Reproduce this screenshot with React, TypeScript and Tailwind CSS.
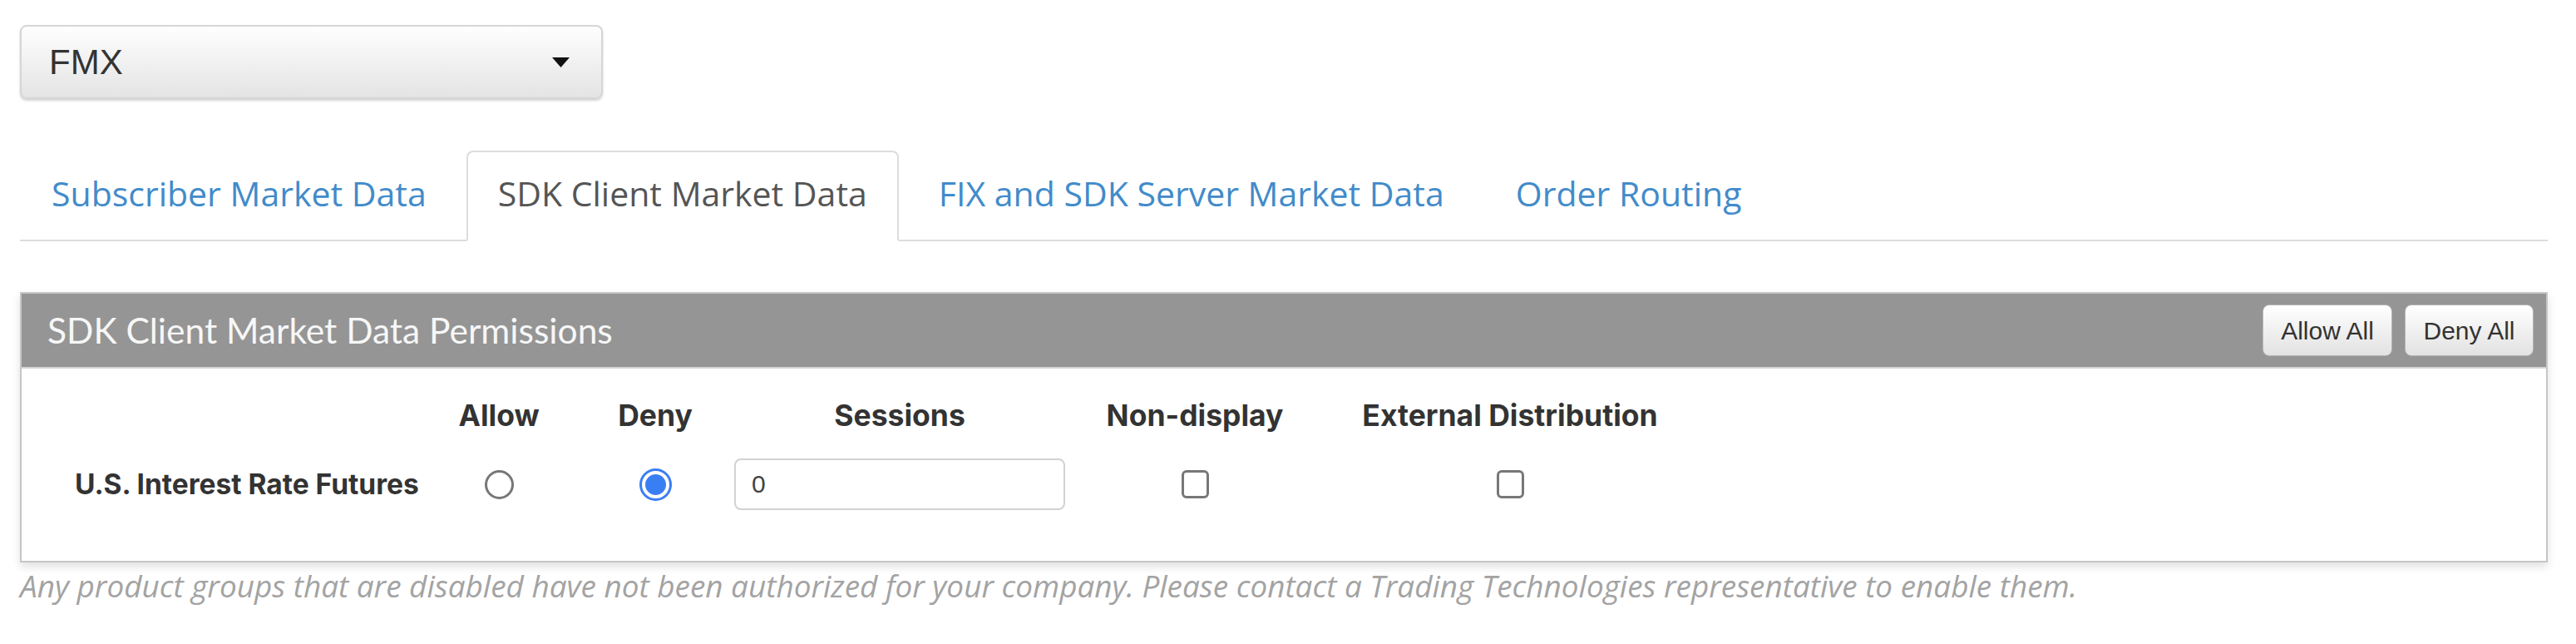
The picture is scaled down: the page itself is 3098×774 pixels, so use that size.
import { useState } from 'react';

const tabs = [
  'Subscriber Market Data',
  'SDK Client Market Data',
  'FIX and SDK Server Market Data',
  'Order Routing',
];

const columns = ['Allow', 'Deny', 'Sessions', 'Non-display', 'External Distribution'];

export default function App() {
  const [activeTab, setActiveTab] = useState(1);
  const [perm, setPerm] = useState<'allow' | 'deny'>('deny');
  const [sessions, setSessions] = useState('0');
  const [nonDisplay, setNonDisplay] = useState(false);
  const [external, setExternal] = useState(false);

  return (
    <div className="min-h-screen bg-white pl-[24px] pr-[34px] pt-[30px] font-['Liberation_Sans',Arial,sans-serif] text-[#333]">
      {/* exchange picker */}
      <button className="flex h-[89px] w-[701px] items-center justify-between rounded-[8px] border-2 border-[#d6d6d6] bg-gradient-to-b from-[#fefefe] to-[#e4e4e4] pl-[33px] pr-[38px] shadow-[0_2px_3px_rgba(0,0,0,0.18)]">
        <span className="text-[42px] leading-none text-[#333]">FMX</span>
        <svg width="21" height="12" viewBox="0 0 21 12">
          <polygon points="0,0 21,0 10.5,12" fill="#111" />
        </svg>
      </button>

      {/* tabs */}
      <div className="mt-[62px] flex gap-[10px] border-b-2 border-[#dddddd]">
        {tabs.map((t, i) => (
          <button
            key={t}
            onClick={() => setActiveTab(i)}
            className={`-mb-[2px] flex h-[109px] items-center rounded-t-[8px] border-2 px-[36px] pb-[6px] font-['Open_Sans',sans-serif] text-[41px] ${
              i === activeTab
                ? 'border-[#dddddd] border-b-white bg-white text-[#555]'
                : 'border-transparent text-[#428bca]'
            }`}
          >
            {t}
          </button>
        ))}
      </div>

      {/* permissions panel */}
      <div className="mt-[61px] border-2 border-[#c6c6c6] shadow-[0_5px_10px_rgba(0,0,0,0.12)]">
        <div className="flex h-[90px] items-center justify-between border-b-2 border-[#d4d4d4] bg-[#959595] pl-[31px] pr-[15px]">
          <h3 className="font-['Lato',sans-serif] text-[42.5px] text-[#f7f7f7]">
            SDK Client Market Data Permissions
          </h3>
          <div className="flex gap-[15px]">
            <button
              onClick={() => setPerm('allow')}
              className="h-[62px] w-[156px] rounded-[8px] border border-[#b5b5b5] bg-gradient-to-b from-white to-[#e2e2e2] text-[30px] text-[#333]"
            >
              Allow All
            </button>
            <button
              onClick={() => setPerm('deny')}
              className="h-[62px] w-[155px] rounded-[8px] border border-[#b5b5b5] bg-gradient-to-b from-white to-[#e2e2e2] text-[30px] text-[#333]"
            >
              Deny All
            </button>
          </div>
        </div>

        <div className="grid grid-cols-[480px_188px_188px_400px_310px_448px] pb-[54px] pt-[33px] font-['Inter',sans-serif] font-bold">
          <div />
          {columns.map((c) => (
            <div key={c} className="h-[48px] text-center text-[35.5px] leading-[48px] text-[#333]">
              {c}
            </div>
          ))}

          <div className="mt-[20px] flex h-[76px] items-center whitespace-nowrap pl-[64px] text-[33.5px] text-[#333]">
            U.S. Interest Rate Futures
          </div>
          <div className="mt-[20px] flex h-[76px] items-center justify-center">
            <button onClick={() => setPerm('allow')}>
              {perm === 'allow' ? <CheckedRadio /> : <EmptyRadio />}
            </button>
          </div>
          <div className="mt-[20px] flex h-[76px] items-center justify-center">
            <button onClick={() => setPerm('deny')}>
              {perm === 'deny' ? <CheckedRadio /> : <EmptyRadio />}
            </button>
          </div>
          <div className="mt-[20px] flex h-[76px] items-center justify-center">
            <input
              value={sessions}
              onChange={(e) => setSessions(e.target.value)}
              className="h-[62px] w-[398px] rounded-[8px] border-2 border-[#d2d2d2] pl-[19px] font-['Liberation_Sans',Arial,sans-serif] text-[30px] font-normal text-[#444] outline-none"
            />
          </div>
          <div className="mt-[20px] flex h-[76px] items-center justify-center">
            <Checkbox checked={nonDisplay} onChange={() => setNonDisplay(!nonDisplay)} />
          </div>
          <div className="mt-[20px] flex h-[76px] items-center justify-center">
            <Checkbox checked={external} onChange={() => setExternal(!external)} />
          </div>
        </div>
      </div>

      <p className="mt-[6px] font-['Open_Sans',sans-serif] text-[36.9px] italic leading-[1.2] text-[#a3a3a3]">
        Any product groups that are disabled have not been authorized for your company. Please
        contact a Trading Technologies representative to enable them.
      </p>
    </div>
  );
}

function EmptyRadio() {
  return <span className="block h-[35px] w-[35px] rounded-full border-[3px] border-[#777] bg-white" />;
}

function CheckedRadio() {
  return (
    <span className="block h-[39px] w-[39px] rounded-full border-[3px] border-[#3a7ef3] bg-white p-[4px]">
      <span className="block h-full w-full rounded-full bg-[#3a7ef3]" />
    </span>
  );
}

function Checkbox({ checked, onChange }: { checked: boolean; onChange: () => void }) {
  return (
    <button
      onClick={onChange}
      className={`flex h-[34px] w-[33px] items-center justify-center rounded-[6px] border-[3px] ${
        checked ? 'border-[#3a7ef3] bg-[#3a7ef3]' : 'border-[#777] bg-white'
      }`}
    >
      {checked && (
        <svg width="20" height="16" viewBox="0 0 20 16">
          <path d="M2 8l5 5 11-11" stroke="white" strokeWidth="3" fill="none" />
        </svg>
      )}
    </button>
  );
}
